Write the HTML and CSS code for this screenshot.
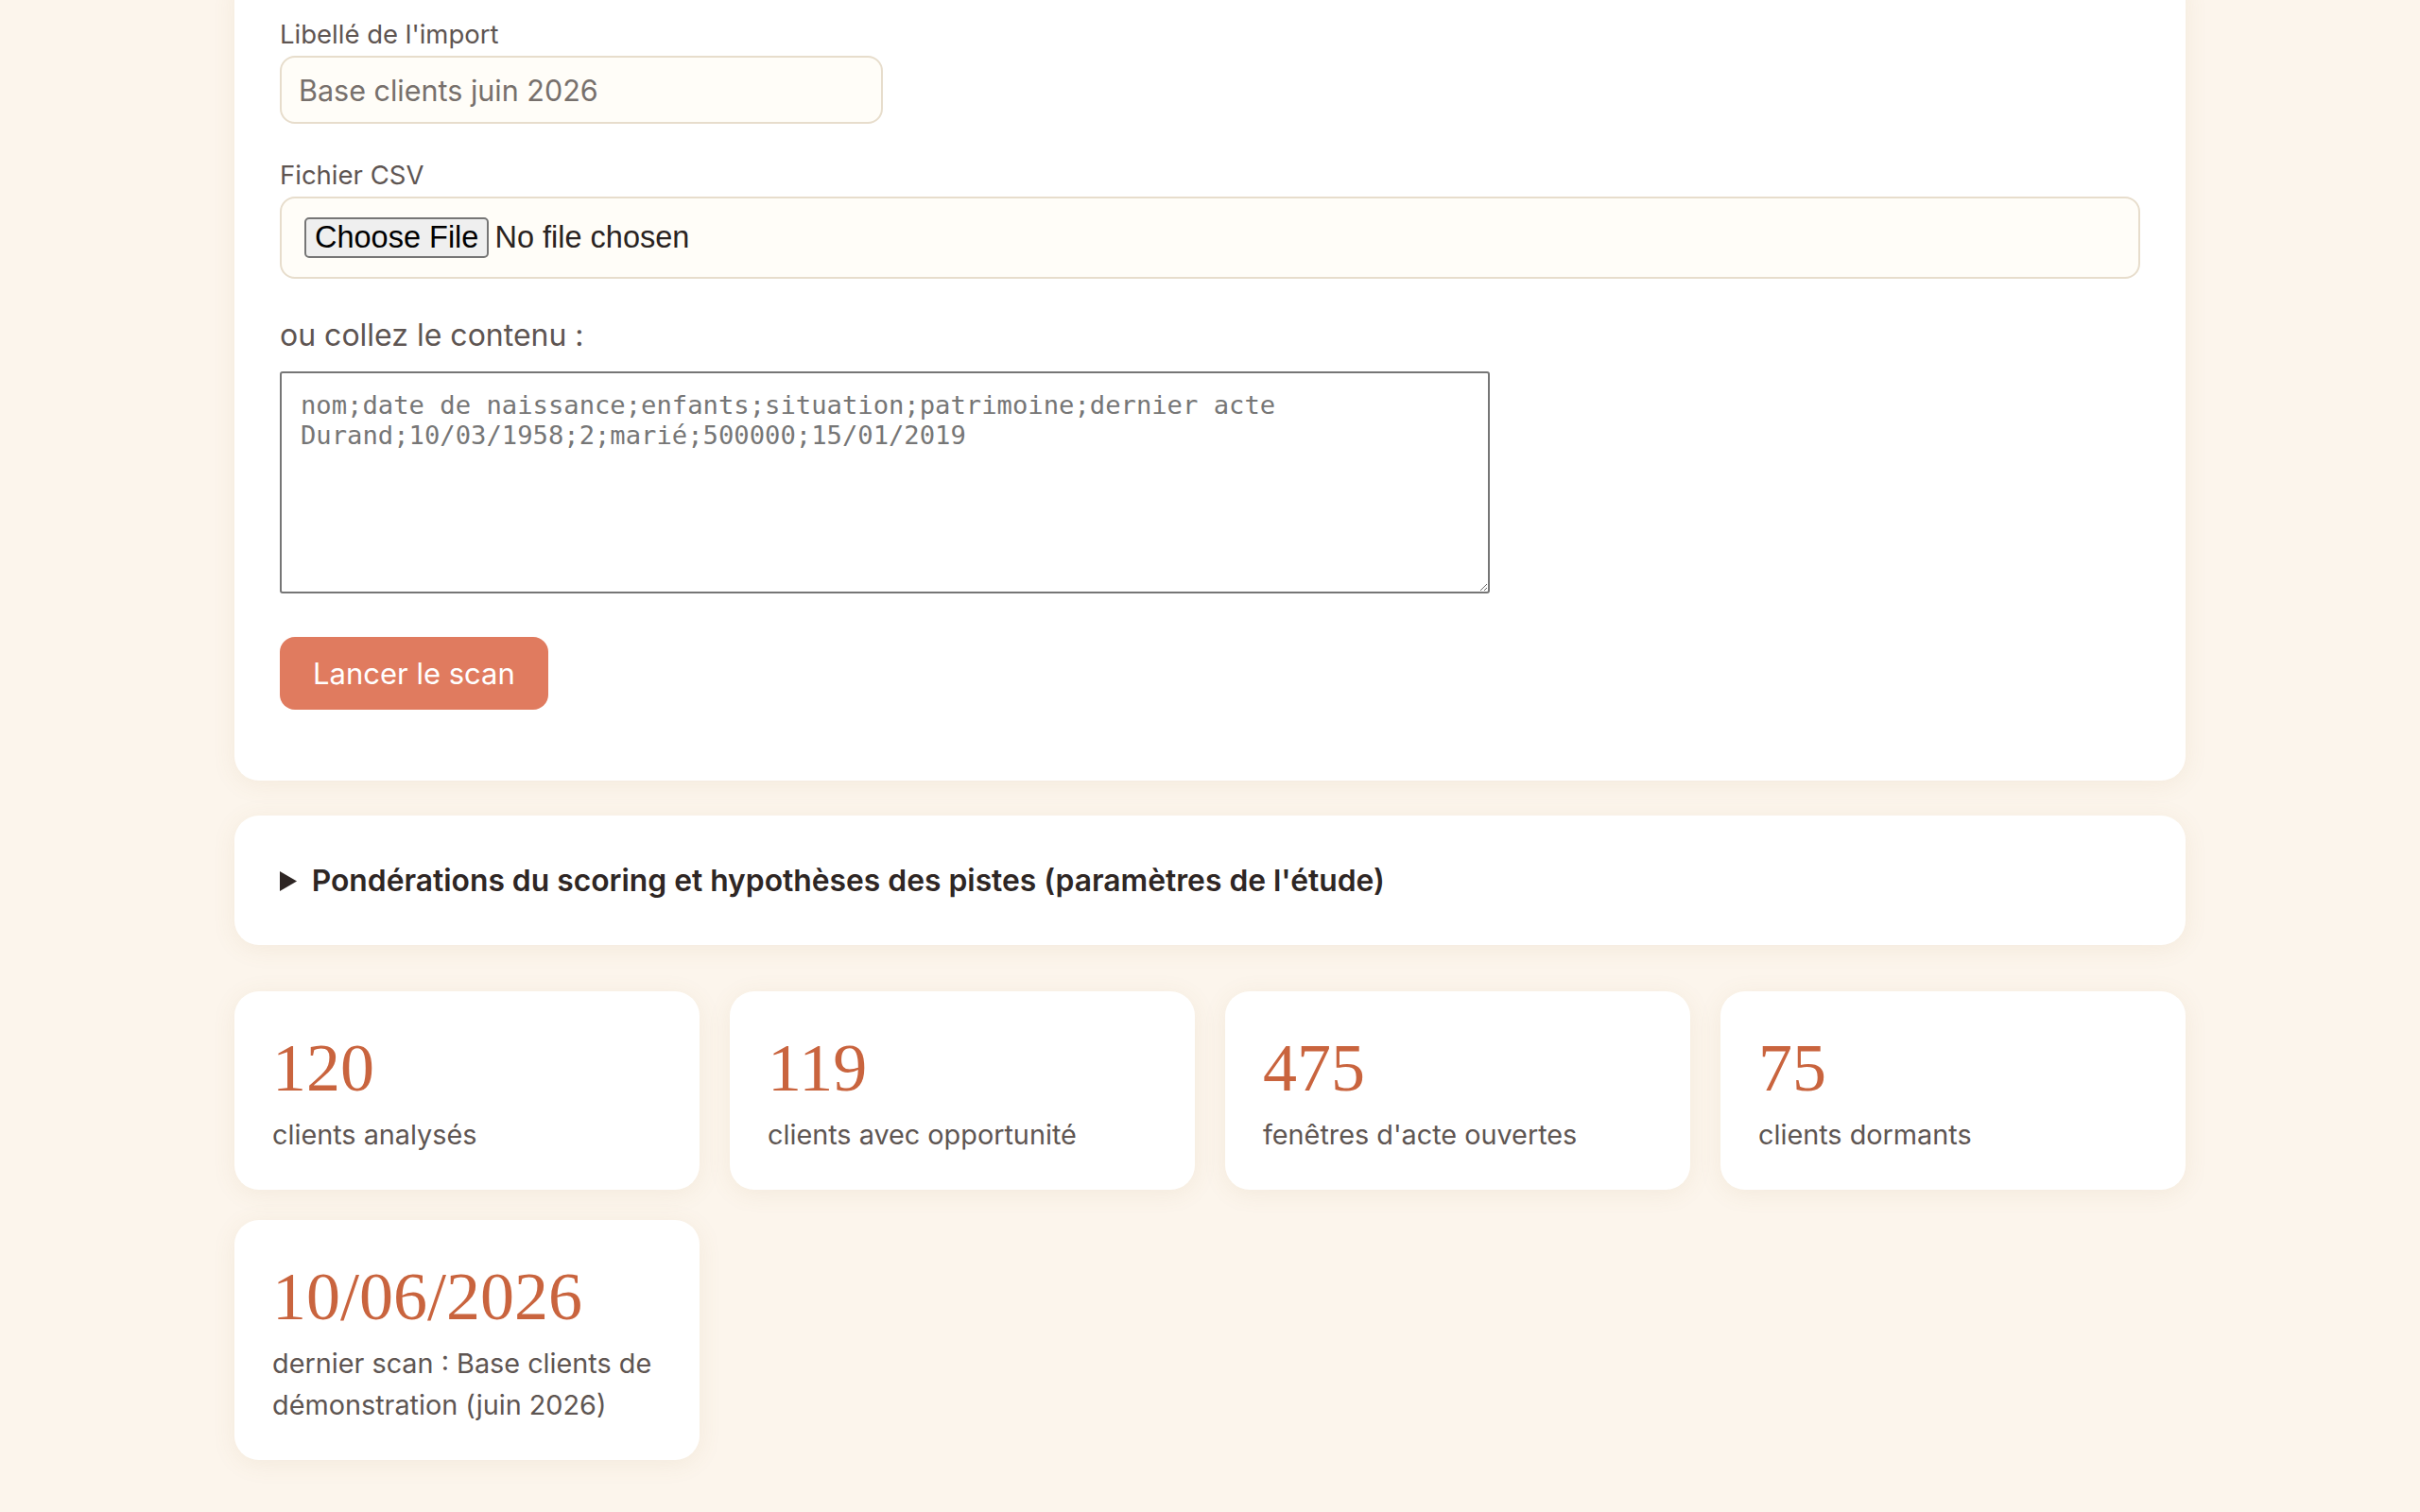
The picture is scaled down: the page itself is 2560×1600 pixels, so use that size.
FILE: index.html
```html
<!DOCTYPE html>
<html lang="fr">
<head>
    <meta charset="utf-8">
    <title>Scan des clients</title>
    <link rel="stylesheet" href="styles.css">
</head>
<body>
    <main class="page">
        <section class="panel import-panel">
            <form class="import-form">
                <div class="field">
                    <label for="libelle">Libellé de l'import</label>
                    <input type="text" id="libelle" class="text-input" placeholder="Base clients juin 2026">
                </div>
                <div class="field">
                    <label for="fichier">Fichier CSV</label>
                    <input type="file" id="fichier" class="file-input" accept=".csv">
                </div>
                <p class="paste-hint">ou collez le contenu :</p>
                <textarea class="csv-text" placeholder="nom;date de naissance;enfants;situation;patrimoine;dernier acte&#10;Durand;10/03/1958;2;marié;500000;15/01/2019"></textarea>
                <button type="submit" class="btn-scan">Lancer le scan</button>
            </form>
        </section>

        <details class="panel params">
            <summary>Pondérations du scoring et hypothèses des pistes (paramètres de l'étude)</summary>
        </details>

        <section class="stats">
            <div class="stat">
                <div class="stat-value">120</div>
                <div class="stat-label">clients analysés</div>
            </div>
            <div class="stat">
                <div class="stat-value">119</div>
                <div class="stat-label">clients avec opportunité</div>
            </div>
            <div class="stat">
                <div class="stat-value">475</div>
                <div class="stat-label">fenêtres d'acte ouvertes</div>
            </div>
            <div class="stat">
                <div class="stat-value">75</div>
                <div class="stat-label">clients dormants</div>
            </div>
            <div class="stat">
                <div class="stat-value">10/06/2026</div>
                <div class="stat-label">dernier scan : Base clients de démonstration (juin 2026)</div>
            </div>
        </section>
    </main>
</body>
</html>
```

FILE: styles.css
```css
body {
    margin: 0;
    background: #fcf5ec;
    font-family: Inter, "Noto Sans", sans-serif;
    color: #2e2624;
}

.page {
    width: 2064px;
    margin: 0 auto;
    padding-bottom: 60px;
}

.panel {
    background: #fff;
    border-radius: 26px;
    padding: 48px;
    box-shadow: 0 4px 26px rgba(150, 120, 70, 0.09);
}

.import-panel {
    margin-top: -30px;
}

.field {
    margin-bottom: 36px;
}

.field label {
    display: block;
    font-size: 27.5px;
    line-height: 36px;
    color: #5e5552;
    margin-bottom: 5px;
}

.text-input {
    display: block;
    box-sizing: border-box;
    width: 638px;
    height: 72px;
    padding: 0 18px;
    border: 2px solid #e7ddcc;
    border-radius: 16px;
    background: #fffdf8;
    font-family: Inter, sans-serif;
    font-size: 30.5px;
    color: #2e2624;
}

.text-input::placeholder {
    color: #77706c;
}

.file-input {
    display: block;
    box-sizing: border-box;
    width: 100%;
    padding: 20px 24px;
    border: 2px solid #e7ddcc;
    border-radius: 16px;
    background: #fffdf8;
    font-family: "Liberation Sans", Arial, sans-serif;
    font-size: 32.5px;
    color: #2a2321;
}

.file-input::file-selector-button {
    font: inherit;
    color: #000;
    padding: 1px 9px;
    margin-right: 6px;
    border: 2px solid #767676;
    border-radius: 5px;
    background: #efefef;
}

.paste-hint {
    margin: 33px 0 14px;
    font-size: 32px;
    line-height: 48px;
    color: #5e5552;
}

.csv-text {
    display: block;
    box-sizing: border-box;
    width: 1280px;
    height: 235px;
    padding: 18px 20px;
    border: 2px solid #767676;
    border-radius: 3px;
    font-family: "DejaVu Sans Mono", monospace;
    font-size: 27.2px;
    line-height: 32px;
    color: #2a2321;
}

.csv-text::placeholder {
    color: #767676;
}

.btn-scan {
    display: block;
    margin: 46px 0 27px;
    height: 77px;
    padding: 0 35px;
    border: none;
    border-radius: 16px;
    background: #e07b5f;
    color: #fff;
    font-family: Inter, sans-serif;
    font-size: 31px;
    cursor: pointer;
}

.params {
    margin-top: 37px;
}

.params summary {
    font-size: 31.8px;
    line-height: 41px;
    font-weight: 600;
    color: #2e2624;
    cursor: pointer;
}

.stats {
    display: grid;
    grid-template-columns: repeat(4, 1fr);
    gap: 32px;
    margin-top: 49px;
}

.stat {
    background: #fff;
    border-radius: 26px;
    padding: 40px 40px 36px;
    box-shadow: 0 4px 26px rgba(150, 120, 70, 0.09);
}

.stat-value {
    font-family: "Liberation Serif", serif;
    font-size: 72px;
    line-height: 82px;
    color: #c9643e;
}

.stat-label {
    margin-top: 8px;
    font-size: 28.8px;
    line-height: 44px;
    color: #5e5552;
}
```
